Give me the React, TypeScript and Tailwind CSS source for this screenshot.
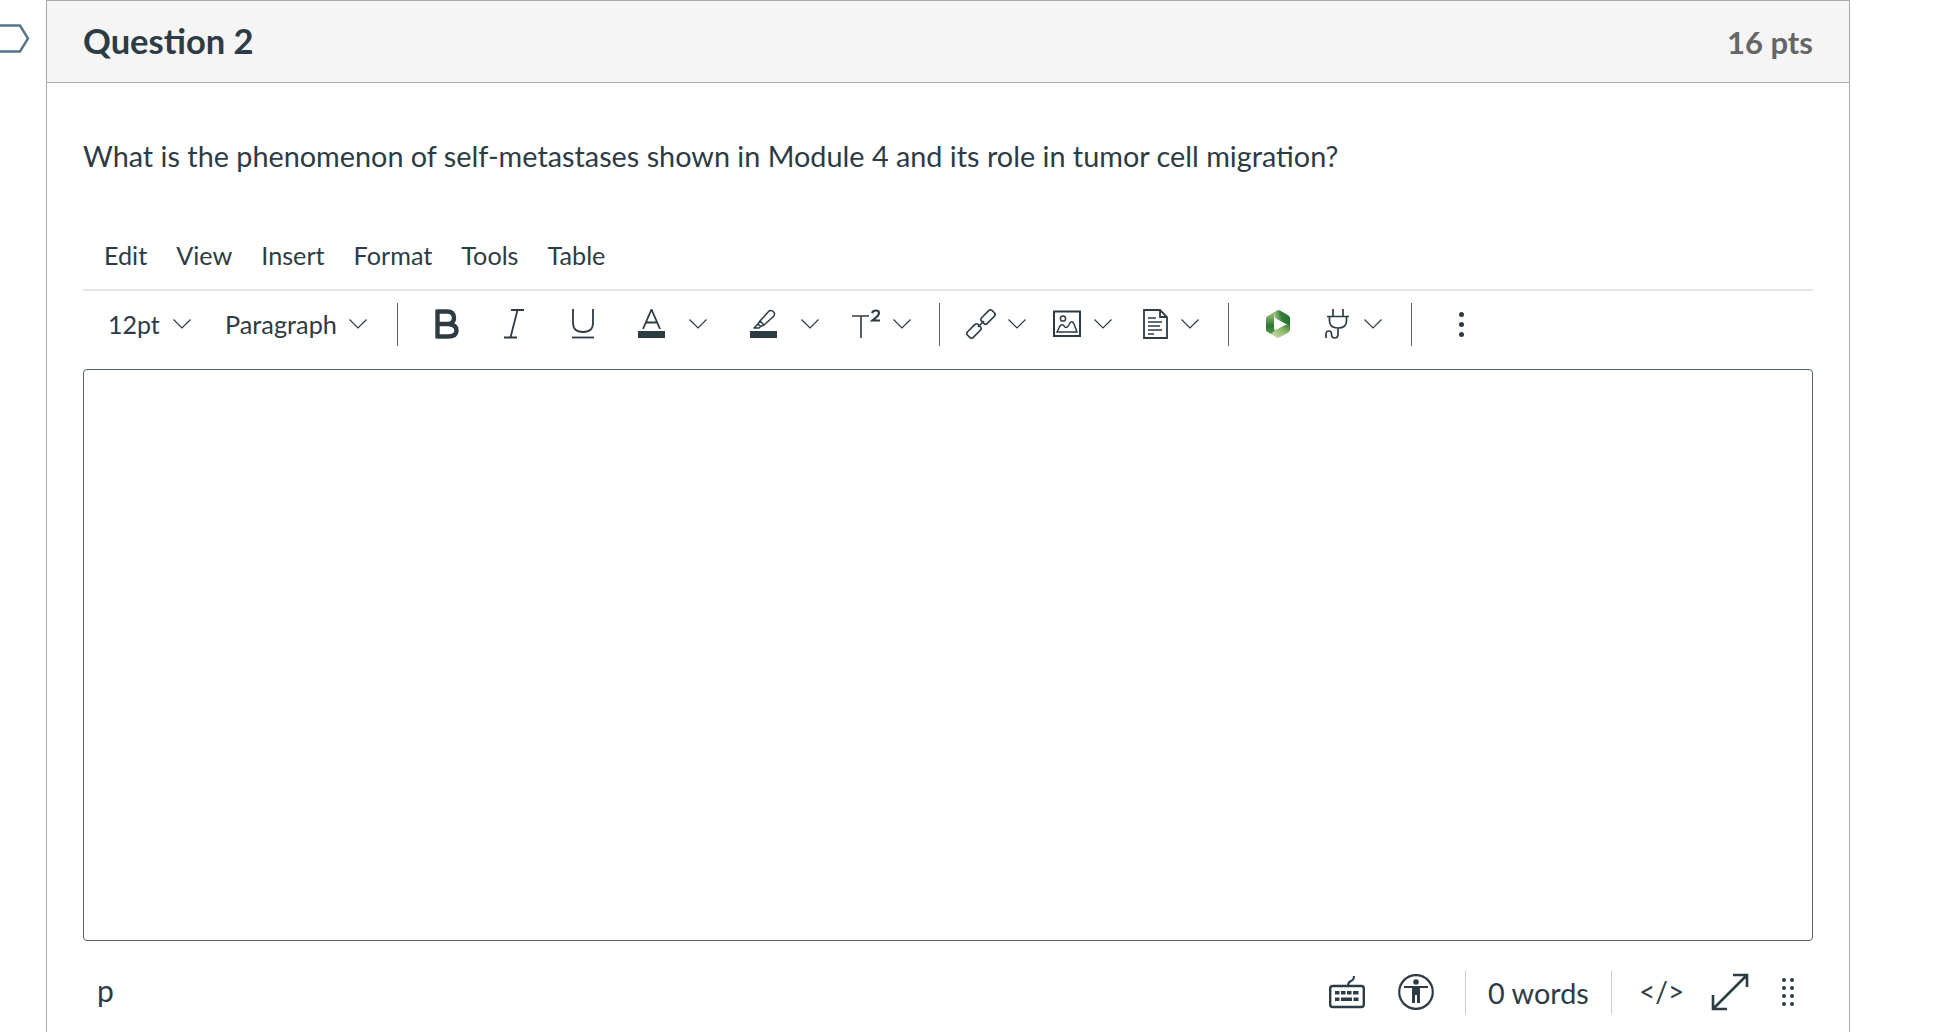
import React from 'react'

const MENU_ITEMS = ['Edit', 'View', 'Insert', 'Format', 'Tools', 'Table']

const Chevron = ({ className = '' }: { className?: string }) => (
  <svg viewBox="0 0 18 10" className={`w-[18px] h-[10px] shrink-0 ${className}`} fill="none" stroke="#2d3b45" strokeWidth="1.2">
    <polyline points="0.5,0.5 9,9 17.5,0.5" />
  </svg>
)

const Separator = ({ className = '' }: { className?: string }) => (
  <div className={`w-[1px] mr-[1px] h-[43px] bg-[#56636c] shrink-0 ${className}`} />
)

const Icon = ({ w, className = '', children }: { w: number; className?: string; children: React.ReactNode }) => (
  <svg viewBox={`0 0 ${w} 30`} width={w} height={30} className={`shrink-0 ${className}`} fill="none" stroke="#2d3b45">
    {children}
  </svg>
)

const GreenLogo = () => (
  <svg viewBox="0 0 26 30" width={26} height={30} className="shrink-0 ml-[35px]">
    <defs>
      <linearGradient id="bandTop" x1="0" y1="0.6" x2="1" y2="0.4">
        <stop offset="0" stopColor="#c3d9a0" />
        <stop offset="0.55" stopColor="#2f7a35" />
        <stop offset="1" stopColor="#24702f" />
      </linearGradient>
      <linearGradient id="bandLeft" x1="0.5" y1="0" x2="0.5" y2="1">
        <stop offset="0" stopColor="#a5c67e" />
        <stop offset="0.6" stopColor="#2b7633" />
        <stop offset="1" stopColor="#5c9c50" />
      </linearGradient>
      <linearGradient id="bandBottom" x1="0" y1="1" x2="1" y2="0">
        <stop offset="0" stopColor="#d2e2b2" />
        <stop offset="0.6" stopColor="#8ab566" />
        <stop offset="1" stopColor="#2b7633" />
      </linearGradient>
    </defs>
    <path d="M13 1 Q14 1 15 1.6 L23.5 6.6 Q25 7.5 25 9.5 L25 17 L19 14 L10 9 L8 4 Z" fill="url(#bandTop)" />
    <path d="M9 3.3 L2.5 7 Q1 8 1 9.5 L1 20.5 Q1 22 2.5 23 L8 26 L11 22 L9 20 L9 8 Z" fill="url(#bandLeft)" />
    <path d="M6 25 L11.5 28.4 Q13 29.2 14.5 28.4 L23.5 23.2 Q25 22.2 25 20.5 L25 15 L20 16 L9 22 Z" fill="url(#bandBottom)" />
    <path d="M9.5 9.5 L20.5 15.5 L9.5 21 Z" fill="#ffffff" />
  </svg>
)

const Toolbar = () => (
  <div className="flex items-center h-[66px] mb-[12px] text-[#2d3b45]">
    <span className="ml-[25px] w-[65px] text-[25px] pt-[2px]">12pt</span>
    <Chevron />
    <span className="ml-[34px] w-[124px] text-[25.3px] pt-[2px]">Paragraph</span>
    <Chevron />
    <Separator className="ml-[30px]" />
    {/* bold */}
    <Icon w={24} className="ml-[36px]">
      <path d="M2.5 2.5 H12 Q19 2.5 19 9 Q19 14.5 13 15 H2.5 M13 15 Q21.5 15.5 21.5 21.5 Q21.5 27.5 13 27.5 H2.5 M2.5 0.5 V29.5" strokeWidth="4.4" />
    </Icon>
    {/* italic */}
    <Icon w={20} className="ml-[45px]">
      <path d="M7 1 H20 M0 28.5 H13 M13.5 1 L6.5 28.5" strokeWidth="1.8" />
    </Icon>
    {/* underline */}
    <Icon w={22} className="ml-[48px]">
      <path d="M1 0 V14 Q1 23 11 23 Q21 23 21 14 V0" strokeWidth="1.8" />
      <path d="M0 28.5 H22" strokeWidth="1.8" />
    </Icon>
    {/* text colour */}
    <Icon w={27} className="ml-[44px]">
      <path d="M5 20 L13.5 0.5 L22 20 M8 13.5 H19" strokeWidth="1.8" />
      <rect x="0" y="22" width="27" height="7" fill="#2d3b45" stroke="none" />
    </Icon>
    <Chevron className="ml-[24px]" />
    {/* highlight */}
    <Icon w={27} className="ml-[43px]">
      <path d="M19 2 Q21 0.8 22.5 2 L24 3.5 Q25 5 24 7 L14 16 L10 12 Z M10 12 L8 15 L10.5 17.5 L14 16 M8 15 L4 19 L9 19 L10.5 17.5" strokeWidth="1.5" strokeLinejoin="round" />
      <rect x="0" y="22" width="27" height="7" fill="#2d3b45" stroke="none" />
    </Icon>
    <Chevron className="ml-[24px]" />
    {/* superscript */}
    <Icon w={29} className="ml-[33px]">
      <path d="M0 7 H17 M9 7 V29" strokeWidth="1.6" />
      <path d="M20 4 Q21 1.5 24 1.5 Q27 1.5 27 4 Q27 6 24 8.5 L20.5 11.5 H28" strokeWidth="2.2" />
    </Icon>
    <Chevron className="ml-[12px]" />
    <Separator className="ml-[28px]" />
    {/* link */}
    <Icon w={30} className="ml-[25px]">
      <g strokeWidth="1.6">
        <rect x="14.5" y="4" width="15" height="8" rx="2.5" transform="rotate(-45 22 8)" />
        <rect x="0.5" y="18" width="15" height="8" rx="2.5" transform="rotate(-45 8 22)" />
        <path d="M12 18 L18 12" />
      </g>
    </Icon>
    <Chevron className="ml-[12px]" />
    {/* image */}
    <Icon w={28} className="ml-[27px]">
      <rect x="1" y="2.5" width="26" height="24.5" strokeWidth="2" />
      <circle cx="10" cy="9.5" r="2.6" strokeWidth="1.5" />
      <path d="M4 23 L7 17 Q9 14 12 18 Q14 20 17 14 Q19 11 21 15 L24 23 Z" strokeWidth="1.5" />
    </Icon>
    <Chevron className="ml-[13px]" />
    {/* document */}
    <Icon w={25} className="ml-[31px]">
      <path d="M1 1 H17 L24 8 V29 H1 Z M17 1 V8 H24" strokeWidth="1.8" />
      <path d="M5 9 H13 M5 13 H19 M5 17 H17 M5 21 H19 M5 25 H11" strokeWidth="1.6" />
    </Icon>
    <Chevron className="ml-[13px]" />
    <Separator className="ml-[29px]" />
    <GreenLogo />
    {/* plug */}
    <Icon w={26} className="ml-[34px]">
      <path d="M8 0 V7 M18 0 V7 M2 7.5 H24" strokeWidth="1.7" />
      <path d="M4.5 8 V12 Q4.5 19 13 19 Q21.5 19 21.5 12 V8 M13 19 V25 Q13 29 9.5 29 Q6.5 29 6.5 25 Q6.5 22 4 22 Q1 22 1 25 V29" strokeWidth="1.7" />
    </Icon>
    <Chevron className="ml-[13px]" />
    <Separator className="ml-[29px]" />
    <div className="ml-[46px] flex flex-col gap-[5px]">
      <div className="w-[5px] h-[5px] rounded-full bg-[#2d3b45]" />
      <div className="w-[5px] h-[5px] rounded-full bg-[#2d3b45]" />
      <div className="w-[5px] h-[5px] rounded-full bg-[#2d3b45]" />
    </div>
  </div>
)

const StatusBar = () => (
  <div className="flex items-center h-[76px] mt-[13px] text-[#2d3b45]">
    <span className="ml-[14px] text-[30px] leading-none w-[1232px] pb-[4px]">p</span>
    <svg viewBox="0 0 36 34" width={36} height={34} className="shrink-0" fill="none" stroke="#2d3b45">
      <path d="M19 11 Q19 7 22 6 Q25 5 25 1" strokeWidth="2" />
      <rect x="1.2" y="11" width="33.6" height="21" rx="2.5" strokeWidth="2.4" />
      <g fill="#2d3b45" stroke="none">
        <rect x="6" y="16" width="4.5" height="3.5" />
        <rect x="12" y="16" width="4.5" height="3.5" />
        <rect x="18" y="16" width="4.5" height="3.5" />
        <rect x="24" y="16" width="5.5" height="3.5" />
        <rect x="6" y="22.5" width="4.5" height="3.5" />
        <rect x="12" y="22.5" width="11" height="3.5" />
        <rect x="24.5" y="22.5" width="5" height="3.5" />
      </g>
    </svg>
    <svg viewBox="0 0 36 36" width={36} height={36} className="shrink-0 ml-[33px]" fill="none" stroke="#2d3b45">
      <circle cx="18" cy="18" r="16.8" strokeWidth="2.2" />
      <circle cx="18" cy="8" r="2.8" fill="#2d3b45" stroke="none" />
      <path d="M6 12 H30 V14 H22 V29 H19 V21 H17 V29 H14 V14 H6 Z" fill="#2d3b45" stroke="none" />
    </svg>
    <div className="w-[1px] h-[43px] bg-[#c7cdd1] ml-[31px] shrink-0" />
    <span className="ml-[22px] w-[123px] text-[28.8px] leading-none pt-[3px]">0 words</span>
    <div className="w-[1px] h-[43px] bg-[#c7cdd1] shrink-0" />
    <span className="ml-[27px] w-[72px] text-[28px] leading-none pb-[2px]">&lt;/&gt;</span>
    <svg viewBox="0 0 38 38" width={38} height={38} className="shrink-0" fill="none" stroke="#2d3b45" strokeWidth="2.6">
      <path d="M2 36 L36 2 M22 2 H36 V14 M2 22 V36 H16" />
    </svg>
    <div className="ml-[33px] grid grid-cols-2 gap-x-[4px] gap-y-[4px]">
      {Array.from({ length: 8 }).map((_, i) => (
        <div key={i} className="w-[4px] h-[4px] rounded-full bg-[#2d3b45]" />
      ))}
    </div>
  </div>
)

const App = () => {
  return (
    <div className="flex w-[1956px] h-[1032px] overflow-hidden bg-white font-['Lato','Open_Sans',sans-serif] text-[#2d3b45]">
      <div className="w-[46px] shrink-0 pt-[24px]">
        <svg viewBox="0 0 30 29" width={30} height={29} fill="none" stroke="#55748c" strokeWidth="2.4">
          <path d="M-2 1.5 H20 L28 14.5 L20 27.5 H-2" />
        </svg>
      </div>
      <div className="w-[1804px] shrink-0 border-x border-t border-[#a9a9a9] h-[1040px]">
        <div className="flex items-center justify-between h-[82px] bg-[#f5f5f5] border-b border-[#a9a9a9] px-[36px]">
          <h2 className="text-[34.5px] font-bold leading-none">Question 2</h2>
          <span className="text-[31px] font-bold text-[#666666] leading-none pt-[1px]">16 pts</span>
        </div>
        <div className="px-[36px]">
          <p className="mt-[53px] text-[28.8px] leading-[40px]">
            What is the phenomenon of self-metastases shown in Module 4 and its role in tumor cell migration?
          </p>
          <div className="flex gap-[29px] pl-[21px] h-[50px] mt-[55px] items-center text-[25.2px]">
            {MENU_ITEMS.map((item) => (
              <span key={item}>{item}</span>
            ))}
          </div>
          <div className="h-[2px] bg-[#e3e6e8] mt-[8px]" />
          <Toolbar />
          <div className="h-[572px] bg-white border border-[#56636c] rounded-[4px]" />
          <StatusBar />
        </div>
      </div>
    </div>
  )
}

export default App
